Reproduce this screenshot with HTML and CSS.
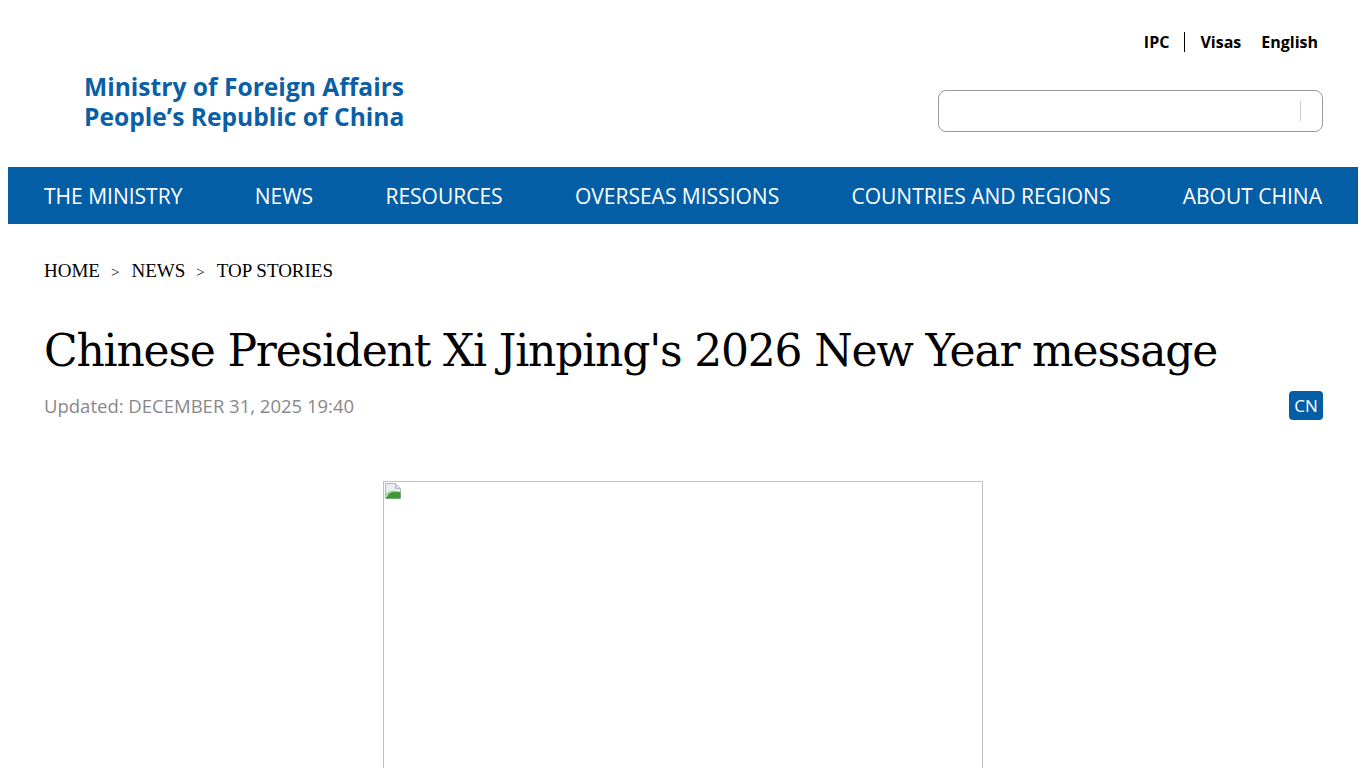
FILE: index.html
```html
<!DOCTYPE html>
<html lang="en">
<head>
<meta charset="utf-8">
<title>Chinese President Xi Jinping's 2026 New Year message</title>
<link rel="stylesheet" href="styles.css">
</head>
<body>
<header class="header">
  <div class="logo">
    <div class="logo-line">Ministry of Foreign Affairs</div>
    <div class="logo-line">People’s Republic of China</div>
  </div>
  <div class="header-right">
    <nav class="toplinks">
      <a class="toplink sep">IPC</a>
      <a class="toplink">Visas</a>
      <a class="toplink last">English</a>
    </nav>
    <div class="search"><span class="search-div"></span></div>
  </div>
</header>
<nav class="mainnav">
  <a>THE MINISTRY</a>
  <a>NEWS</a>
  <a>RESOURCES</a>
  <a>OVERSEAS MISSIONS</a>
  <a>COUNTRIES AND REGIONS</a>
  <a>ABOUT CHINA</a>
</nav>
<main class="content">
  <div class="crumbs"><span>HOME</span><span class="gt">&gt;</span><span>NEWS</span><span class="gt">&gt;</span><span>TOP STORIES</span></div>
  <h1 class="title">Chinese President Xi Jinping's 2026 New Year message</h1>
  <div class="meta">
    <span class="updated">Updated: DECEMBER 31, 2025 19:40</span>
    <span class="cn">CN</span>
  </div>
  <div class="figure">
    <svg class="broken" width="16" height="16" viewBox="0 0 16 16">
      <path d="M0.5 0.5h10l5 5v10h-15z" fill="#e8eef4" stroke="#b0b8c0"/>
      <path d="M10.5 0.5v5h5" fill="#d4dbe2" stroke="#b0b8c0"/>
      <path d="M0.5 15.5 L4 10.5 Q8 7.5 15.5 9 V15.5Z" fill="#3d9a33"/>
      <path d="M0.5 12.5 Q4 7.5 10 8.5" fill="none" stroke="#9bd287" stroke-width="1.4"/>
    </svg>
  </div>
</main>
</body>
</html>
```
FILE: styles.css
```css
html, body { margin: 0; padding: 0; background: #fff; }
body { margin: 8px; font-family: "Open Sans", "Noto Sans", sans-serif; color: #000; }
a { color: inherit; text-decoration: none; }

.header {
  display: flex;
  justify-content: space-between;
  align-items: flex-start;
  height: 159px;
}
.logo {
  margin-left: 76px;
  margin-top: 64px;
  color: #0a5fa6;
  font-family: "Open Sans", sans-serif;
  font-weight: 700;
  font-size: 24.6px;
  line-height: 30px;
}
.header-right {
  display: flex;
  flex-direction: column;
  align-items: flex-end;
  margin-right: 35px;
}
.toplinks {
  display: flex;
  align-items: center;
  margin-top: 22px;
  margin-right: 5px;
  font-size: 16px;
  font-weight: 700;
  line-height: 24px;
}
.toplink { padding-left: 15px; }
.toplink:first-child { padding-left: 0; }
.toplink.last { padding-left: 20px; }
.toplink.sep { padding-right: 15px; border-right: 1px solid #000; line-height: 20px; }
.search {
  margin-top: 36px;
  width: 383px;
  height: 40px;
  border: 1px solid #999;
  border-radius: 8px;
  display: flex;
  justify-content: flex-end;
  align-items: center;
}
.search-div { width: 1px; height: 20px; background: #ccc; margin-right: 21px; }

.mainnav {
  background: #045ea6;
  height: 57px;
  display: flex;
  justify-content: space-between;
  align-items: center;
  padding: 0 36px;
  font-size: 21px;
  color: #fff;
}

.content { padding: 0 35px 0 36px; }
.crumbs {
  margin-top: 37px;
  font-family: "Liberation Serif", serif;
  font-size: 19px;
  line-height: 20px;
}
.crumbs .gt { margin: 0 12px 0 11px; font-size: 15px; }
.title {
  margin: 41px 0 0;
  font-family: "DejaVu Serif", serif;
  font-weight: 400;
  font-size: 44px;
  line-height: 56px;
  letter-spacing: -1.2px;
}
.meta {
  margin-top: 12px;
  display: flex;
  justify-content: space-between;
  align-items: center;
}
.updated { color: #888; font-size: 18.5px; }
.cn {
  background: #045ea6;
  color: #fff;
  font-size: 17px;
  border-radius: 4px;
  width: 34px;
  height: 29px;
  display: flex;
  align-items: center;
  justify-content: center;
}
.figure {
  margin: 61px 0 0 339px;
  width: 598px;
  height: 400px;
  border: 1px solid #c0c0c0;
  position: relative;
}
.broken { position: absolute; left: 1px; top: 1px; }
```
